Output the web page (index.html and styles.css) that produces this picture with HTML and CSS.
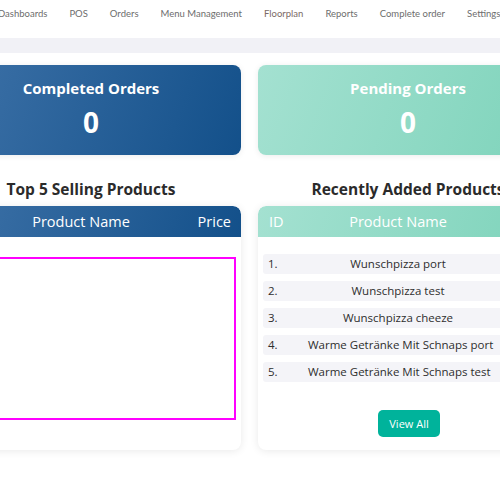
FILE: index.html
```html
<!DOCTYPE html>
<html>
<head>
<meta charset="utf-8">
<link rel="stylesheet" href="styles.css">
</head>
<body>
<nav class="nav">
  <span class="nav-item">Dashboards</span>
  <span class="nav-item">POS</span>
  <span class="nav-item">Orders</span>
  <span class="nav-item">Menu Management</span>
  <span class="nav-item floor">Floorplan</span>
  <span class="nav-item">Reports</span>
  <span class="nav-item">Complete order</span>
  <span class="nav-item">Settings</span>
</nav>
<div class="strip"></div>
<main class="main">
  <section class="stats">
    <div class="stat blue">
      <div class="stat-title">Completed Orders</div>
      <div class="stat-value">0</div>
    </div>
    <div class="stat teal">
      <div class="stat-title">Pending Orders</div>
      <div class="stat-value">0</div>
    </div>
  </section>
  <section class="tables">
    <div class="col">
      <h2 class="sec-title">Top 5 Selling Products</h2>
      <div class="tcard">
        <div class="thead blue">
          <span class="c-id">ID</span>
          <span class="c-name">Product Name</span>
          <span class="c-price">Price</span>
        </div>
        <div class="tbody">
          <div class="chart-box"></div>
        </div>
      </div>
    </div>
    <div class="col">
      <h2 class="sec-title">Recently Added Products</h2>
      <div class="tcard">
        <div class="thead teal">
          <span class="c-id">ID</span>
          <span class="c-name">Product Name</span>
          <span class="c-price">Price</span>
        </div>
        <div class="tbody list">
          <div class="row"><span class="r-id">1.</span><span class="r-name">Wunschpizza port</span></div>
          <div class="row"><span class="r-id">2.</span><span class="r-name">Wunschpizza test</span></div>
          <div class="row"><span class="r-id">3.</span><span class="r-name">Wunschpizza cheeze</span></div>
          <div class="row"><span class="r-id">4.</span><span class="r-name">Warme Getränke Mit Schnaps port</span></div>
          <div class="row"><span class="r-id">5.</span><span class="r-name">Warme Getränke Mit Schnaps test</span></div>
          <div class="btn-wrap"><button class="btn">View All</button></div>
        </div>
      </div>
    </div>
  </section>
</main>
</body>
</html>
```
FILE: styles.css
```css
html, body {
  margin: 0;
  padding: 0;
  background: #fff;
  overflow: hidden;
}
body {
  font-family: "Open Sans", "Liberation Sans", sans-serif;
  color: #2e2e2e;
  width: 500px;
  height: 500px;
}
.nav {
  height: 38px;
  display: flex;
  gap: 22px;
  margin-left: -2px;
  padding-top: 7px;
  box-sizing: border-box;
  white-space: nowrap;
  background: #fff;
}
.nav-item {
  font-family: "Lato", sans-serif;
  font-size: 9.5px;
  color: #6d6d6d;
  line-height: 14px;
}
.nav-item.floor { color: #7b6a66; }
.strip {
  height: 15px;
  background: #f1f1f6;
}
.main {
  margin-left: -59px;
  width: 617px;
}
.stats {
  display: grid;
  grid-template-columns: 300px 300px;
  gap: 17px;
  margin-top: 12px;
}
.stat {
  height: 90px;
  border-radius: 8px;
  color: #fff;
  text-align: center;
  box-sizing: border-box;
  padding-top: 12px;
  box-shadow: 0 1px 6px rgba(0,0,0,0.08);
}
.blue { background: linear-gradient(110deg, #3e72a8 0%, #13508a 100%); }
.teal { background: linear-gradient(110deg, #a4e1d1 0%, #7dd3ba 100%); }
.stat-title {
  font-family: "Open Sans", sans-serif;
  font-size: 15px;
  font-weight: 700;
  line-height: 22px;
}
.stat-value {
  font-size: 28px;
  font-weight: 700;
  line-height: 36px;
  margin-top: 5px;
}
.tables {
  display: grid;
  grid-template-columns: 300px 300px;
  gap: 17px;
  margin-top: 23px;
}
.col { display: flex; flex-direction: column; }
.sec-title {
  margin: 0 0 6px;
  text-align: center;
  font-size: 15.5px;
  font-weight: 700;
  line-height: 22px;
  color: #2b2b2b;
}
.tcard {
  background: #fff;
  border-radius: 8px;
  box-shadow: 0 1px 8px rgba(0,0,0,0.09);
  height: 244px;
  overflow: hidden;
}
.thead {
  height: 31px;
  display: grid;
  grid-template-columns: 50px 180px 1fr;
  align-items: center;
  color: #fff;
  font-size: 14.5px;
  border-radius: 8px 8px 0 0;
}
.c-id { padding-left: 11px; }
.c-name { text-align: center; }
.c-price { text-align: right; padding-right: 10px; }
.tbody { padding: 20px 5px 0; }
.chart-box {
  height: 159px;
  border: 2px solid #ff00ff;
}
.list { padding-top: 17px; display: flex; flex-direction: column; gap: 7px; }
.row {
  height: 20px;
  background: #f4f4f8;
  border-radius: 3px;
  display: grid;
  grid-template-columns: 45px 180px 1fr;
  align-items: center;
  font-size: 11.5px;
  line-height: 18px;
  color: #2e2e2e;
}
.r-id { padding-left: 5px; }
.r-name { text-align: center; white-space: nowrap; }
.btn-wrap {
  display: flex;
  justify-content: flex-start;
  padding-left: 115px;
  margin-top: 21px;
}
.btn {
  width: 62px;
  height: 27px;
  border: none;
  border-radius: 5px;
  background: #00b39b;
  color: #fff;
  font-family: "Open Sans", sans-serif;
  font-size: 11px;
  padding: 0;
}
```
